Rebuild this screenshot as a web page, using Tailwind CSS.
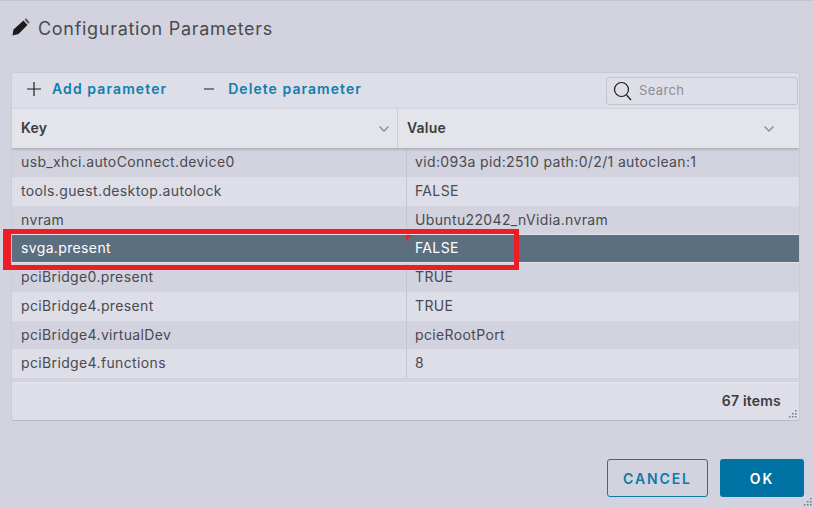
<!DOCTYPE html>
<html lang="en">

<head>
    <meta charset="UTF-8">
    <meta name="viewport" content="width=device-width, initial-scale=1.0">
    <title>Configuration Parameters</title>
    <script src="https://cdn.jsdelivr.net/npm/@tailwindcss/browser@4"></script>
</head>

<body class="bg-[#d2d3de] font-['Inter','Liberation_Sans',sans-serif] text-[#454545] overflow-hidden">
    <div class="relative w-[813px] h-[507px] flex flex-col border-t border-[#c4c5cf]">
        <!-- Title -->
        <div class="flex items-center h-[55px] pl-[12px] shrink-0">
            <svg class="w-[18px] h-[19px] mb-[3px]" viewBox="0 0 18 19" fill="#1c1c1c">
                <path d="M0.500 17.500 L1.500 11.500 L11.500 2.500 L15.500 7 L6.500 16 Z" />
                <path d="M12.500 1.500 L14.200 0.300 L17.500 4.200 L16.300 5.800 Z" fill="#55555c" />
            </svg>
            <h1 class="ml-[8px] text-[18px] text-[#4a4a4f] tracking-[0.7px]">Configuration Parameters</h1>
        </div>

        <!-- Panel -->
        <div class="relative mt-[16px] mx-[11px] w-[789px] h-[349px] flex flex-col bg-[#dddee7] rounded-[3px] border border-[#cacbd5] border-b-[#b9bac4] overflow-hidden">
            <!-- Toolbar -->
            <div class="flex items-center h-[36px] shrink-0 pl-[15px] pr-[1px]">
                <svg class="w-[14px] h-[14px] mb-[5px]" viewBox="0 0 14 14" stroke="#1c1c1c" stroke-width="1.200"><path d="M7 0v14M0 7h14" /></svg>
                <span class="ml-[11px] mb-[5px] text-[14px] font-semibold text-[#0f7fae] tracking-[1.1px]">Add parameter</span>
                <svg class="ml-[37px] mb-[5px] w-[10px] h-[14px]" viewBox="0 0 10 14" stroke="#1c1c1c" stroke-width="1.200"><path d="M0 7h10" /></svg>
                <span class="ml-[14px] mb-[5px] text-[14px] font-semibold text-[#0f7fae] tracking-[1.05px]">Delete parameter</span>
                <div class="ml-auto w-[192px] h-[28px] flex items-center border border-[#c3c4ce] rounded-[3px] pl-[6px]">
                    <svg class="w-[19px] h-[20px]" viewBox="0 0 19 20" fill="none" stroke="#1c1c1c" stroke-width="1.200"><circle cx="8.500" cy="8.500" r="7" /><path d="M13.500 14 L18 19" /></svg>
                    <span class="ml-[7px] text-[13px] text-[#8c8d96] tracking-[0.35px]">Search</span>
                </div>
            </div>

            <!-- Column headers -->
            <div class="relative z-10 grid grid-cols-[386px_1fr] h-[39px] pb-[3px] shrink-0 bg-[#e4e5ea] shadow-[0_1px_3px_rgba(0,0,0,0.25)] text-[14px] font-semibold text-[#3c3c40] tracking-[0.2px]">
                <div class="flex items-center justify-between pl-[9px] pr-[8px] -mb-[3px] pb-[3px] border-r border-[#cbccd4]">
                    <span>Key</span>
                    <svg class="w-[10px] h-[6px] mt-[3px]" viewBox="0 0 10 6" fill="none" stroke="#8b8b92" stroke-width="1.400"><path d="M0.500 0.500 L5 5 L9.500 0.500" /></svg>
                </div>
                <div class="flex items-center justify-between pl-[9px] pr-[25px]">
                    <span>Value</span>
                    <svg class="w-[10px] h-[6px] mt-[3px]" viewBox="0 0 10 6" fill="none" stroke="#8b8b92" stroke-width="1.400"><path d="M0.500 0.500 L5 5 L9.500 0.500" /></svg>
                </div>
            </div>

            <!-- Rows -->
            <div class="grid grid-cols-[395px_1fr] auto-rows-[28.75px] text-[14px] text-[#4a4a50] tracking-[0.36px] leading-[28px]">
                <div class="bg-[#d2d3de] pl-[9px] border-r border-[#c4c5cf]">usb_xhci.autoConnect.device0</div>
                <div class="bg-[#d2d3de] pl-[8px]">vid:093a pid:2510 path:0/2/1 autoclean:1</div>
                <div class="pl-[9px] border-r border-[#c4c5cf]">tools.guest.desktop.autolock</div>
                <div class="pl-[8px]">FALSE</div>
                <div class="bg-[#d2d3de] pl-[9px] border-r border-[#c4c5cf]">nvram</div>
                <div class="bg-[#d2d3de] pl-[8px]">Ubuntu22042_nVidia.nvram</div>
                <div class="relative bg-[#5b6f80] text-white pl-[9px] border-y border-[#e4e5ea] leading-[26px] border-r-[#54687a]">svga.present</div>
                <div class="relative bg-[#5b6f80] text-white pl-[8px] border-y border-[#e4e5ea] border-r-0 leading-[26px]">
                    <span class="absolute -left-[1px] top-0 w-0 h-0 border-t-[6px] border-r-[6px] border-t-[#ee1c25] border-r-transparent"></span>FALSE
                </div>
                <div class="bg-[#d2d3de] pl-[9px] border-r border-[#c4c5cf]">pciBridge0.present</div>
                <div class="bg-[#d2d3de] pl-[8px]">TRUE</div>
                <div class="pl-[9px] border-r border-[#c4c5cf]">pciBridge4.present</div>
                <div class="pl-[8px]">TRUE</div>
                <div class="bg-[#d2d3de] pl-[9px] border-r border-[#c4c5cf]">pciBridge4.virtualDev</div>
                <div class="bg-[#d2d3de] pl-[8px]">pcieRootPort</div>
                <div class="pl-[9px] border-r border-[#c4c5cf]">pciBridge4.functions</div>
                <div class="pl-[8px]">8</div>
            </div>
            <div class="h-[4px] shrink-0 bg-[#d2d3de]"></div>

            <!-- Footer -->
            <div class="flex-1 flex items-center justify-end pr-[18px] pb-[2px] border-t border-[#e4e5ea] text-[14px] font-semibold text-[#3c3c40] tracking-[0.2px]">67 items</div>
            <svg class="absolute right-[2px] bottom-[2px] w-[8px] h-[8px]" viewBox="0 0 8 8" fill="#77777f"><rect x="6" y="0" width="1.500" height="1.500" /><rect x="3" y="3" width="1.500" height="1.500" /><rect x="6" y="3" width="1.500" height="1.500" /><rect x="0" y="6" width="1.500" height="1.500" /><rect x="3" y="6" width="1.500" height="1.500" /><rect x="6" y="6" width="1.500" height="1.500" /></svg>
        </div>

        <!-- Actions -->
        <div class="flex justify-end gap-[12px] mt-[38px] pr-[9px]">
            <button class="w-[101px] h-[38px] border border-[#0f79a8] rounded-[3px] text-[14px] font-semibold text-[#0f79a8] tracking-[1.9px]">CANCEL</button>
            <button class="w-[84px] h-[38px] bg-[#0072a3] rounded-[3px] text-[14px] font-semibold text-white tracking-[1.9px]">OK</button>
        </div>
        <svg class="absolute right-[1px] bottom-[1px] w-[8px] h-[8px]" viewBox="0 0 8 8" fill="#77777f"><rect x="6" y="0" width="1.500" height="1.500" /><rect x="3" y="3" width="1.500" height="1.500" /><rect x="6" y="3" width="1.500" height="1.500" /><rect x="0" y="6" width="1.500" height="1.500" /><rect x="3" y="6" width="1.500" height="1.500" /><rect x="6" y="6" width="1.500" height="1.500" /></svg>

        <!-- Annotation box -->
        <div class="absolute left-[3px] top-[228px] w-[516px] h-[41px] border-[5px] border-l-[8px] border-[#ee1c25] z-20"></div>
    </div>
</body>

</html>
